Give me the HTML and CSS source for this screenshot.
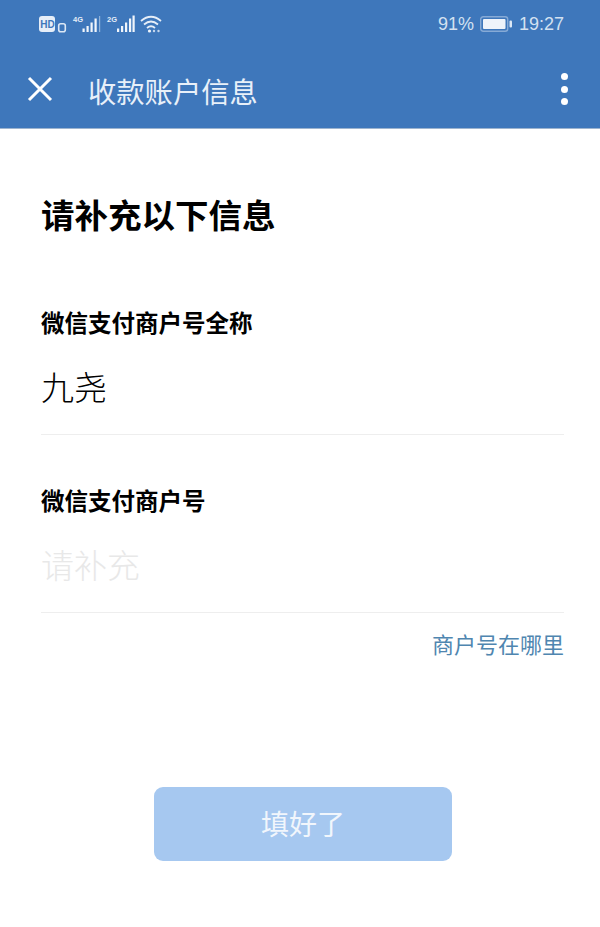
FILE: index.html
```html
<!DOCTYPE html>
<html>
<head>
	<title>收款账户信息</title>
	<meta charset="utf-8">
	<link rel="stylesheet" href="styles.css">
</head>
<body>
<div class="topo">
	<div class="status">
		<svg class="status-esq" width="124" height="20" viewBox="0 0 124 20">
			<rect x="0" y="2" width="16" height="16" rx="3" fill="#e6eef8"/>
			<text x="1.300" y="14" class="mini-hd">HD</text>
			<rect x="19.700" y="9.700" width="6.600" height="8" rx="2" fill="none" stroke="#dce8f5" stroke-width="1.600"/>
			<text x="34" y="7.500" class="mini">4G</text>
			<rect x="43.500" y="14.500" width="2.200" height="3.500" fill="#f0f5fb"/>
			<rect x="47.500" y="12" width="2.200" height="6" fill="#f0f5fb"/>
			<rect x="51.500" y="8.500" width="2.200" height="9.500" fill="#f0f5fb"/>
			<rect x="55.500" y="4.500" width="2.200" height="13.500" fill="#f0f5fb"/>
			<rect x="60" y="2" width="1.200" height="16" fill="#8fb2da"/>
			<text x="68" y="7.500" class="mini">2G</text>
			<rect x="78" y="14.500" width="2.200" height="3.500" fill="#f0f5fb"/>
			<rect x="82" y="12" width="2.200" height="6" fill="#f0f5fb"/>
			<rect x="86" y="8.500" width="2.200" height="9.500" fill="#f0f5fb"/>
			<rect x="90" y="4.500" width="2.200" height="13.500" fill="#f0f5fb"/>
			<rect x="93.500" y="1.500" width="2.200" height="16.500" fill="#f0f5fb"/>
			<path d="M102 7 Q112 -1.500 122 7 M105 10.500 Q112 4.500 119 10.500 M108 14 Q112 10.500 116 14" fill="none" stroke="#e6eef8" stroke-width="1.800"/>
			<circle cx="110.500" cy="17" r="1.600" fill="#f0f5fb"/>
			<circle cx="115" cy="17" r="1.200" fill="#c5d7ec"/>
			<circle cx="119.500" cy="17" r="1.200" fill="#c5d7ec"/>
		</svg>
		<div class="status-dir">
			<span>91%</span>
			<svg class="bateria" width="33" height="16" viewBox="0 0 33 16">
				<rect x="0.700" y="0.700" width="27" height="14.600" rx="2.500" fill="none" stroke="#86aad6" stroke-width="1.400"/>
				<rect x="3" y="3" width="22.500" height="10" rx="1" fill="#eef3fa"/>
				<rect x="29.500" y="4.500" width="2.500" height="7" rx="1" fill="#dce8f5"/>
			</svg>
			<span>19:27</span>
		</div>
	</div>
	<div class="barra">
		<svg class="fechar" width="26" height="26" viewBox="0 0 26 26">
			<path d="M2 2 L24 24 M24 2 L2 24" stroke="#fff" stroke-width="3" fill="none"/>
		</svg>
		<div class="titulo">收款账户信息</div>
		<div class="pontos"><i></i><i></i><i></i></div>
	</div>
</div>

<div class="conteudo">
	<h1>请补充以下信息</h1>

	<div class="campo">
		<div class="rotulo">微信支付商户号全称</div>
		<div class="valor">九尧</div>
	</div>

	<div class="campo segundo">
		<div class="rotulo">微信支付商户号</div>
		<div class="valor vazio">请补充</div>
	</div>

	<div class="ajuda">商户号在哪里</div>

	<button class="botao">填好了</button>
</div>
</body>
</html>
```

FILE: styles.css
```css
body{
	margin: 0;
	background: #fff;
	font-family: "Noto Sans CJK SC", "Liberation Sans", sans-serif;
}
.topo{
	height: 129px;
	background: #3e77bb;
	border-bottom: 1px solid #9db4cf;
	box-sizing: border-box;
	color: #fff;
}
.status{
	display: flex;
	justify-content: space-between;
	align-items: center;
	height: 48px;
	padding: 0 36px 0 39px;
}
.mini{
	font-family: "Liberation Sans", sans-serif;
	font-size: 7.500px;
	font-weight: bold;
	fill: #e6eef8;
}
.mini-hd{
	font-family: "Liberation Sans", sans-serif;
	font-size: 10px;
	font-weight: bold;
	fill: #3e77bb;
}
.status-dir{
	display: flex;
	align-items: center;
	gap: 6px;
	font-family: "Liberation Sans", sans-serif;
	font-size: 18px;
	color: #d3e1f1;
}
.barra{
	display: flex;
	align-items: center;
	height: 80px;
	padding: 2px 32px 0 27px;
	box-sizing: border-box;
}
.titulo{
	margin-left: 35px;
	padding-top: 2px;
	font-size: 28.300px;
	color: #e8f0f9;
	flex: 1;
}
.pontos{
	display: flex;
	flex-direction: column;
	gap: 5.500px;
}
.pontos i{
	display: block;
	width: 7px;
	height: 7px;
	border-radius: 50%;
	background: #fff;
}
.conteudo{
	padding: 0 36px 0 41px;
}
h1{
	margin: 0;
	padding-top: 61px;
	font-size: 33.500px;
	line-height: 48px;
	font-weight: bold;
	color: #000;
}
.campo{
	margin-top: 66px;
	border-bottom: 1px solid #eeeeee;
}
.segundo{
	margin-top: 47px;
}
.rotulo{
	font-size: 23.500px;
	line-height: 36px;
	font-weight: bold;
	color: #000;
}
.valor{
	margin-top: 22px;
	padding-bottom: 24px;
	font-size: 33px;
	font-weight: 300;
	line-height: 48px;
	color: #000;
}
.vazio{
	color: #e8e8e8;
}
.ajuda{
	margin-top: 14px;
	text-align: right;
	font-size: 22px;
	line-height: 33px;
	color: #4f86b0;
}
.botao{
	display: block;
	width: 298px;
	height: 74px;
	margin: 127px 0 0 113px;
	padding: 0 0 3px;
	border: 0;
	border-radius: 9px;
	background: #a6c8f0;
	color: #f1f6fc;
	font-family: inherit;
	font-size: 28px;
}
```
